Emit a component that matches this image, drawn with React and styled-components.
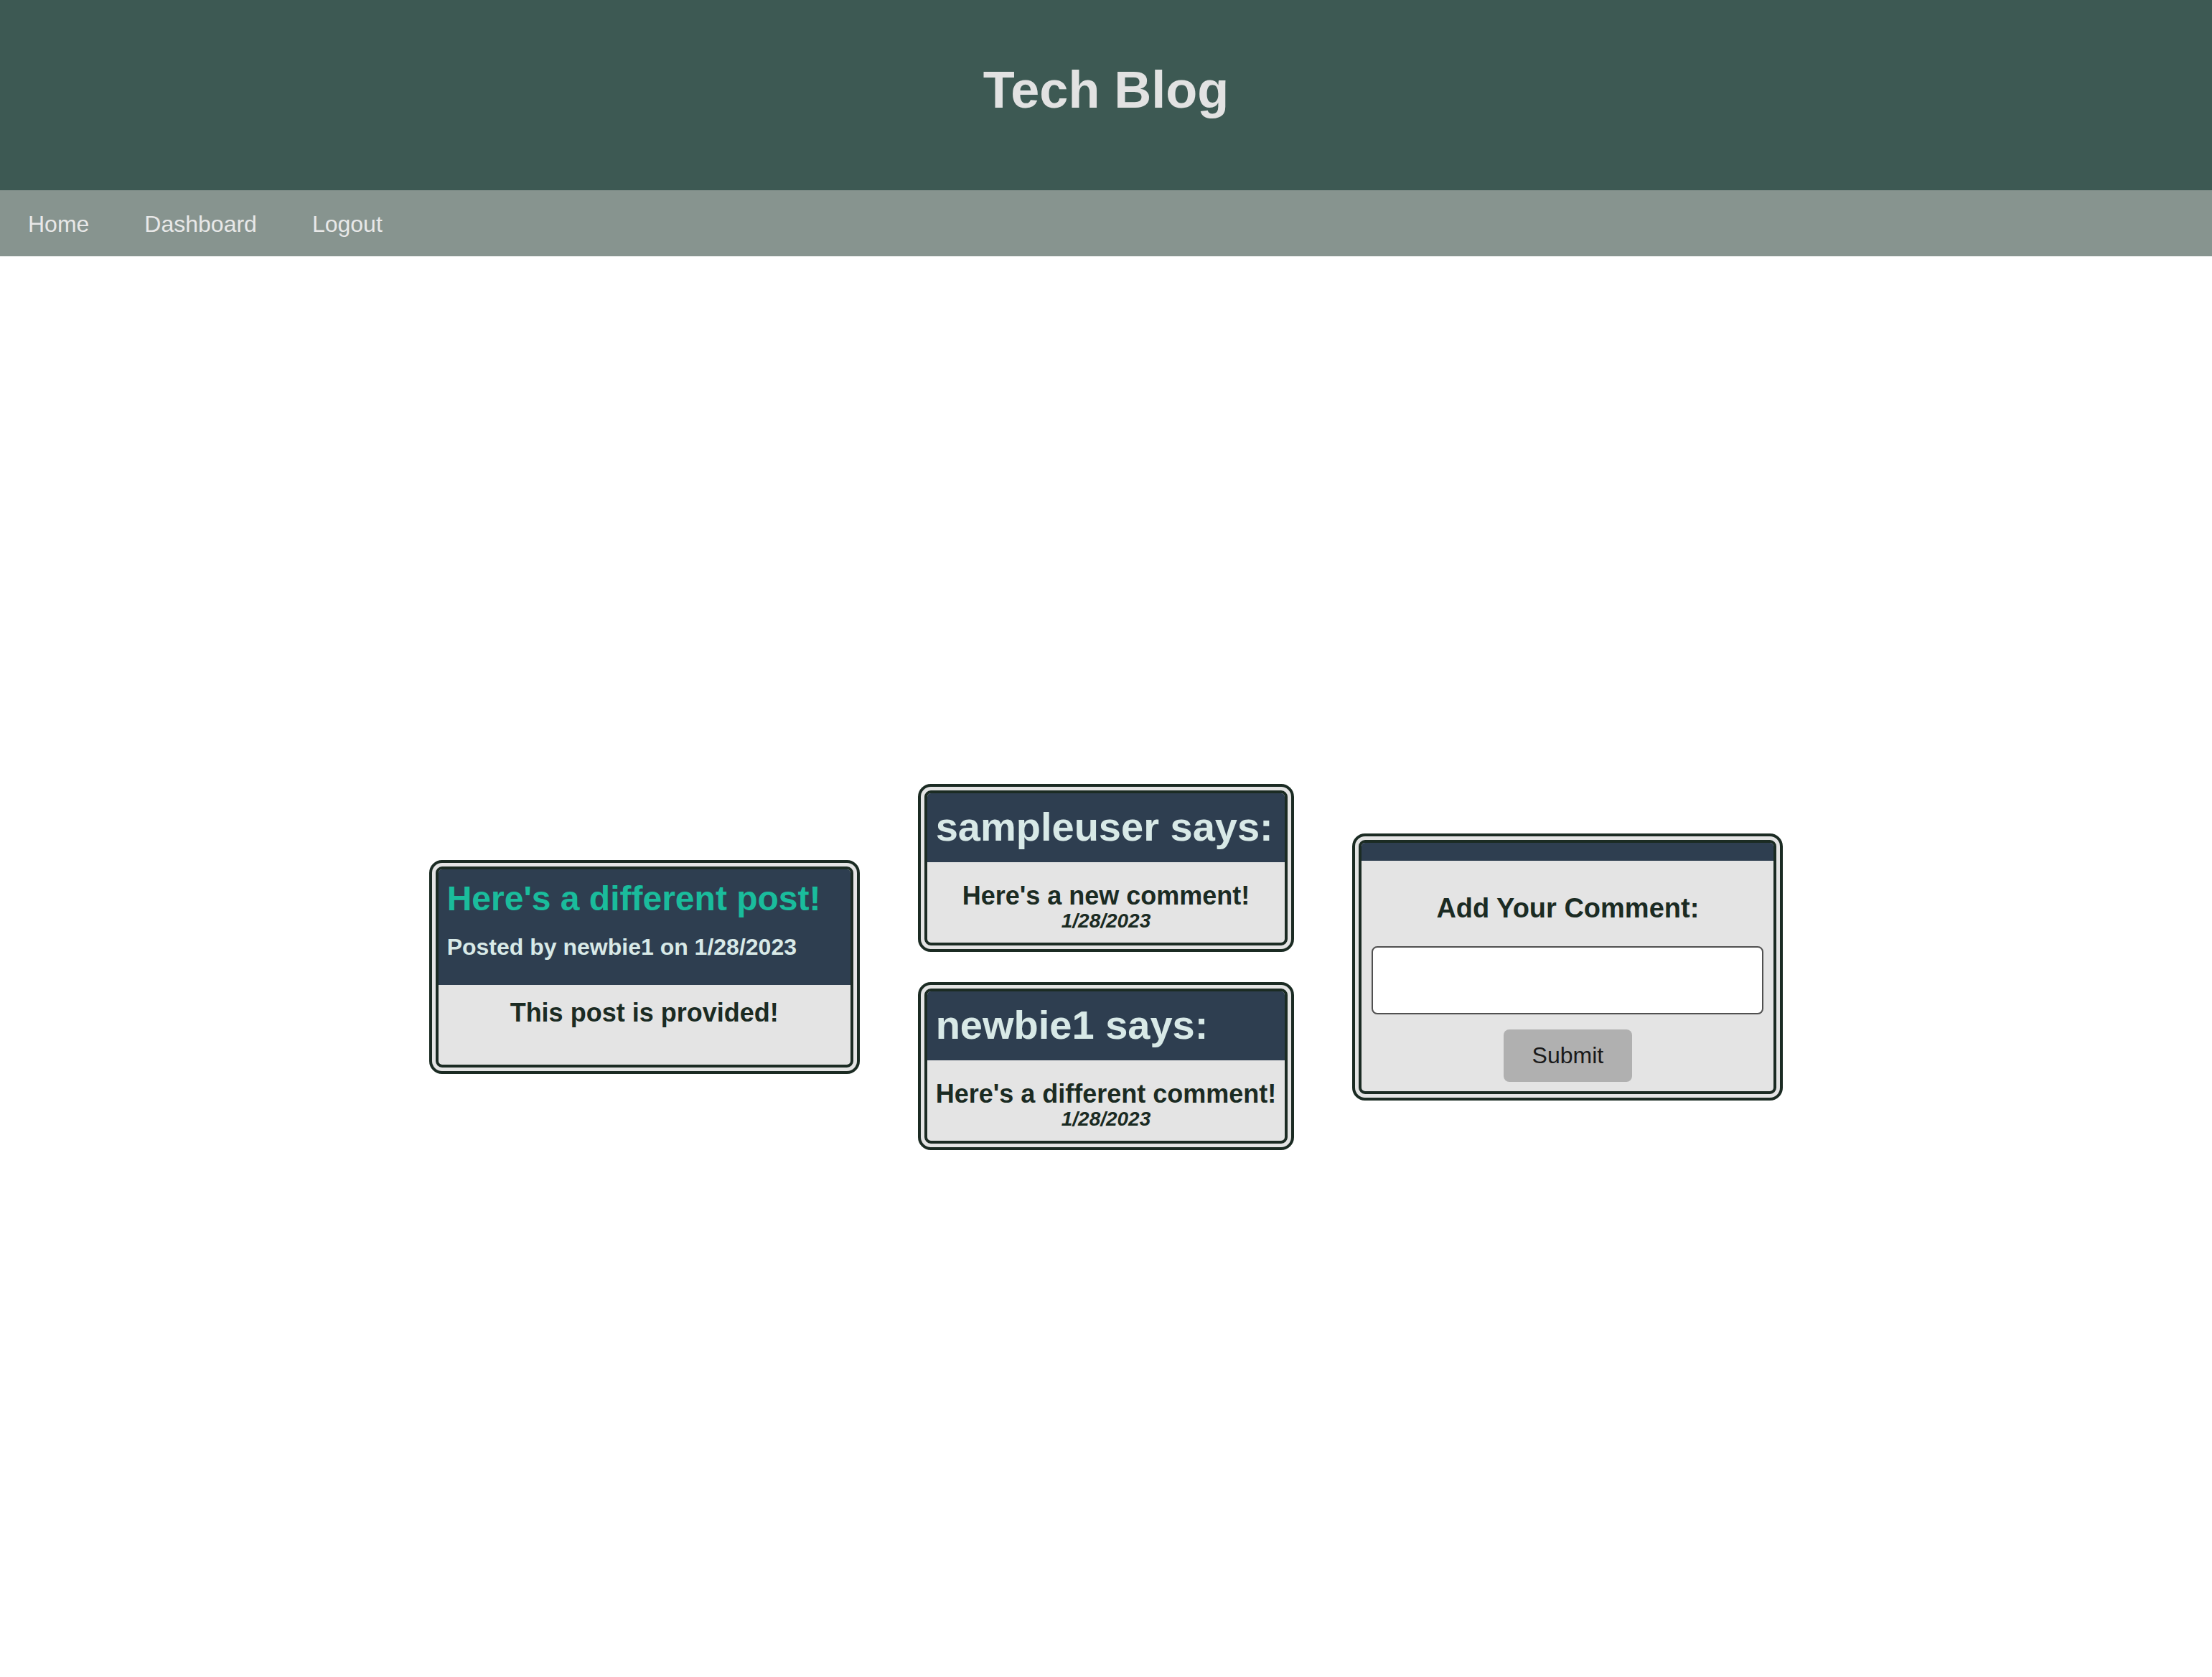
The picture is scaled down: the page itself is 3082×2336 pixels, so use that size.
import styled, { createGlobalStyle } from "styled-components";

const GlobalStyle = createGlobalStyle`
  html, body {
    margin: 0;
    padding: 0;
  }
  body {
    font-family: "Liberation Sans", Arial, Helvetica, sans-serif;
    font-size: 32px;
    background: #ffffff;
  }
  #root {
    min-height: 100vh;
    display: flex;
    flex-direction: column;
  }
`;

const Header = styled.header`
  background: #3d5953;
  padding: 84px 0 99px;
  text-align: center;
`;

const Title = styled.h1`
  margin: 0;
  font-size: 72px;
  font-weight: bold;
  color: #e2e2e2;
`;

const Nav = styled.nav`
  background: #87948f;
  height: 92px;
  box-sizing: border-box;
  padding: 2px 39px 0;
  display: flex;
  align-items: center;
  gap: 77px;
`;

const NavLink = styled.a`
  color: #e8e8e8;
  text-decoration: none;
  font-size: 32px;
`;

const Main = styled.main`
  flex: 1;
  display: flex;
  justify-content: center;
  align-items: center;
  gap: 81px;
`;

const Card = styled.div`
  box-sizing: border-box;
  width: ${(p) => p.width || "auto"};
  background: #e4e4e4;
  border: 13px double #1b2b23;
  border-radius: 18px;
  overflow: hidden;
`;

const CardHead = styled.div`
  background: #2e3e50;
  padding: ${(p) => p.pad || "0"};
  height: ${(p) => p.height || "auto"};
`;

const PostTitle = styled.h2`
  margin: 0;
  font-size: 48px;
  color: #1abc9c;
`;

const PostMeta = styled.p`
  margin: 22px 0 0;
  font-size: 32px;
  font-weight: bold;
  color: #d8e9e7;
`;

const CardBody = styled.div`
  padding: ${(p) => p.pad};
  text-align: center;
`;

const BodyText = styled.h3`
  margin: 0;
  font-size: 36px;
  font-weight: bold;
  color: #1b2b23;
`;

const Column = styled.div`
  display: flex;
  flex-direction: column;
  gap: 42px;
`;

const Author = styled.h2`
  margin: 0;
  font-size: 56px;
  font-weight: bold;
  color: #d8e9e7;
`;

const DateText = styled.div`
  font-size: 28px;
  line-height: 28px;
  font-weight: bold;
  font-style: italic;
  color: #1b2b23;
`;

const FormTitle = styled.h3`
  margin: 0 0 31px;
  font-size: 38px;
  font-weight: bold;
  color: #1b2b23;
`;

const Input = styled.textarea`
  display: block;
  box-sizing: border-box;
  width: 100%;
  height: 95px;
  border: 2px solid #505050;
  border-radius: 8px;
  background: #ffffff;
  resize: none;
  font-family: inherit;
  font-size: 32px;
`;

const Button = styled.button`
  margin-top: 21px;
  height: 73px;
  padding: 0 40px;
  background: #b0b0b0;
  border: none;
  border-radius: 8px;
  font-family: inherit;
  font-size: 32px;
  color: #1a1a1a;
`;

const comments = [
  { user: "sampleuser", text: "Here's a new comment!", date: "1/28/2023" },
  { user: "newbie1", text: "Here's a different comment!", date: "1/28/2023" },
];

export default function App() {
  return (
    <>
      <GlobalStyle />
      <Header>
        <Title>Tech Blog</Title>
      </Header>
      <Nav>
        <NavLink href="#">Home</NavLink>
        <NavLink href="#">Dashboard</NavLink>
        <NavLink href="#">Logout</NavLink>
      </Nav>
      <Main>
        <Card width="600px">
          <CardHead pad="13px 12px 34px">
            <PostTitle>Here's a different post!</PostTitle>
            <PostMeta>Posted by newbie1 on 1/28/2023</PostMeta>
          </CardHead>
          <CardBody pad="18px 12px 51px">
            <BodyText>This post is provided!</BodyText>
          </CardBody>
        </Card>

        <Column>
          {comments.map((c, i) => (
            <Card key={i}>
              <CardHead pad="14px 12px 17px">
                <Author>{c.user} says:</Author>
              </CardHead>
              <CardBody pad="26px 12px 16px">
                <BodyText>{c.text}</BodyText>
                <DateText>{c.date}</DateText>
              </CardBody>
            </Card>
          ))}
        </Column>

        <Card width="600px">
          <CardHead height="25px" />
          <CardBody pad="45px 14px 13px">
            <FormTitle>Add Your Comment:</FormTitle>
            <Input />
            <Button>Submit</Button>
          </CardBody>
        </Card>
      </Main>
    </>
  );
}
